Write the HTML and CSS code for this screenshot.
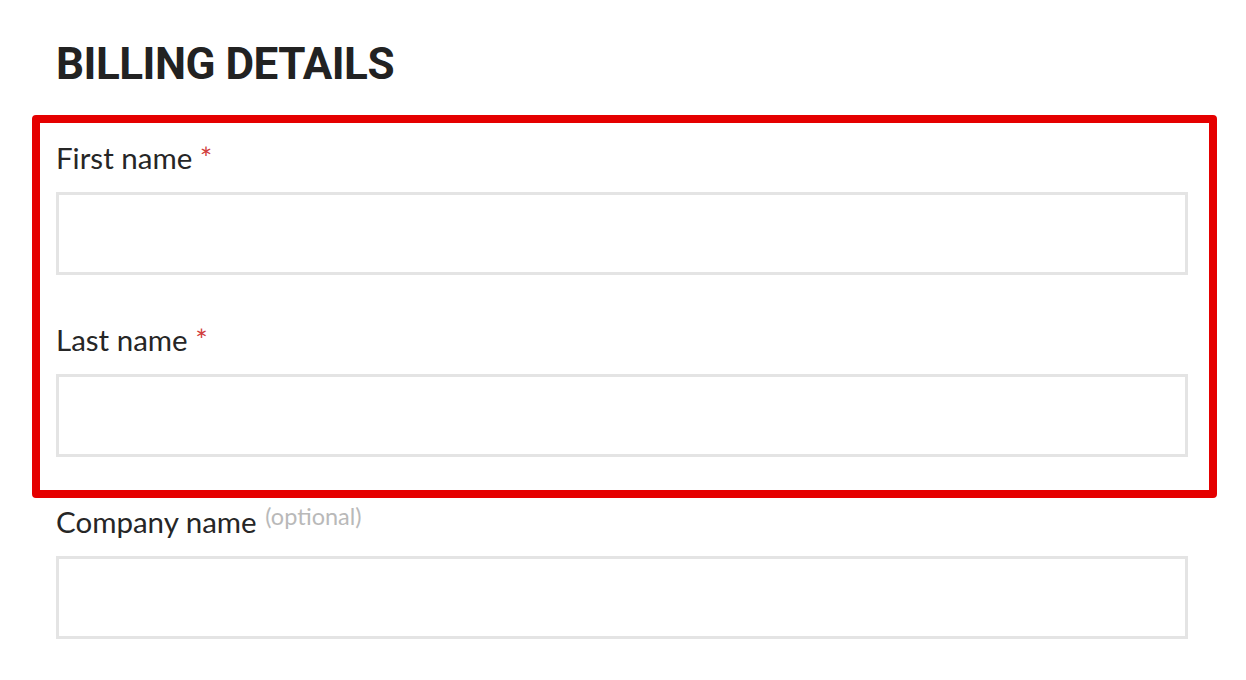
FILE: index.html
```html
<!DOCTYPE html>
<html>
<head lang="en">
    <meta charset="UTF-8">
    <title>Billing details</title>
    <link rel="stylesheet" href="styles.css">
</head>
<body>
    <form class="checkout">
        <h3 class="checkout-title">BILLING DETAILS</h3>
        <div class="highlight">
            <p class="field">
                <label class="field-label" for="first_name">First name <abbr class="required" title="required">*</abbr></label>
                <input class="field-input" type="text" id="first_name">
            </p>
            <p class="field">
                <label class="field-label" for="last_name">Last name <abbr class="required" title="required">*</abbr></label>
                <input class="field-input" type="text" id="last_name">
            </p>
        </div>
        <p class="field">
            <label class="field-label" for="company">Company name <span class="optional">(optional)</span></label>
            <input class="field-input" type="text" id="company">
        </p>
    </form>
</body>
</html>
```
FILE: styles.css
```css
body{
    margin:0;
    background:#fff;
    color:#262626;
    font-family:Lato, "Open Sans", sans-serif;
}
.checkout{
    width:1132px;
    padding:42px 0 0 56px;
}
.checkout-title{
    margin:0 0 29px;
    font-family:Roboto, Inter, sans-serif;
    font-weight:700;
    font-size:44px;
    height:44px;
    letter-spacing:-0.5px;
    line-height:44px;
    color:#222;
}

/* red annotation frame around the name fields */
.highlight{
    margin:0 -29px 6px -24px;
    padding:17px 21px 33px 16px;
    border:8px solid #e50000;
    border-radius:4px;
}
.highlight .field{margin-top:0;}
.highlight .field:last-child{margin-bottom:0;}

.field{
    margin:0 0 47px;
    display:flex;
    flex-direction:column;
}
.field-label{
    display:block;
    margin-bottom:16px;
    font-size:29.5px;
    line-height:36px;
}
.required{
    color:#d13b3b;
    text-decoration:none;
    border:0;
}
.optional{
    font-size:23.5px;
    color:#b9b9b9;
    vertical-align:top;
    position:relative;
    top:-6px;
    margin-left:1px;
}
.field-input{
    box-sizing:border-box;
    width:100%;
    height:83px;
    margin:0;
    border:3px solid #e4e4e4;
    background:#fff;
    outline:none;
}
```
